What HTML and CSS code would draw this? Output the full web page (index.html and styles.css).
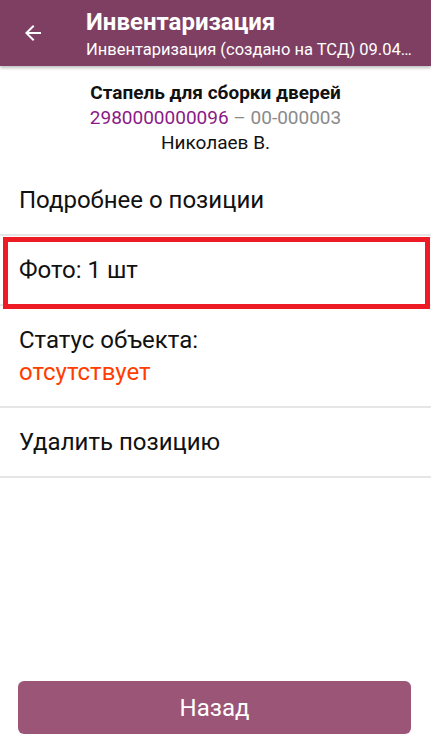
FILE: index.html
```html
<!DOCTYPE html>
<html lang="ru">
<head>
<meta charset="utf-8">
<link rel="stylesheet" href="styles.css">
</head>
<body>
<div class="screen">
  <header class="appbar">
    <div class="back">
      <svg width="24" height="24" viewBox="0 0 24 24"><path d="M20 11H7.83l5.59-5.59L12 4l-8 8 8 8 1.41-1.41L7.83 13H20v-2z" fill="#fff"/></svg>
    </div>
    <div class="titles">
      <div class="title">Инвентаризация</div>
      <div class="subtitle">Инвентаризация (создано на ТСД) 09.04…</div>
    </div>
  </header>
  <section class="info">
    <div class="name">Стапель для сборки дверей</div>
    <div class="codes"><span class="barcode">2980000000096</span><span class="art"> – 00-000003</span></div>
    <div class="person">Николаев В.</div>
  </section>
  <div class="menu">
    <div class="item">Подробнее о позиции</div>
    <div class="item highlighted">Фото: 1 шт<span class="mark"></span></div>
    <div class="item status">
      <div>Статус объекта:</div>
      <div class="missing">отсутствует</div>
    </div>
    <div class="item">Удалить позицию</div>
  </div>
  <div class="spacer"></div>
  <div class="footer">
    <button class="btn">Назад</button>
  </div>
</div>
</body>
</html>
```
FILE: styles.css
```css
* { box-sizing: border-box; }
html, body { margin: 0; padding: 0; }
body { font-family: Roboto, "Noto Sans", sans-serif; background: #fff; color: #111; }
.screen { width: 431px; height: 739px; display: flex; flex-direction: column; overflow: hidden; }
.appbar { height: 66px; background: #7f3f62; display: flex; align-items: flex-start; color: #fff; box-shadow: 0 2px 3px rgba(0,0,0,0.25); flex-shrink: 0; position: relative; z-index: 1; }
.back { width: 86px; display: flex; align-items: center; padding-left: 21px; height: 100%; }
.titles { flex: 1; min-width: 0; padding-top: 8px; }
.title { font-size: 24px; font-weight: 700; line-height: 28px; }
.subtitle { font-size: 16.5px; line-height: 22px; white-space: nowrap; margin-top: 3px; }
.info { text-align: center; padding-top: 14px; font-size: 19px; line-height: 25px; }
.name { font-weight: 700; }
.barcode { color: #8a1a86; }
.art { color: #8a8a8a; }
.person { color: #111; }
.menu { margin-top: 11px; display: flex; flex-direction: column; }
.item { font-size: 24px; padding: 0 19px; height: 70px; display: flex; align-items: center; border-bottom: 2px solid #e6e6e6; }
.item.highlighted { position: relative; }
.mark { position: absolute; left: 3px; right: 1px; top: 1px; bottom: -5px; border: 5px solid #ed1c24; }
.item.status { height: 102px; flex-direction: column; align-items: flex-start; justify-content: center; line-height: 32px; }
.missing { color: #ff3d00; }
.spacer { flex: 1; }
.footer { padding: 0 20px 5px 18px; }
.btn { width: 100%; height: 53px; background: #9b5577; color: #fff; border: none; border-radius: 6px; font-family: Roboto, sans-serif; font-size: 24px; }
```
